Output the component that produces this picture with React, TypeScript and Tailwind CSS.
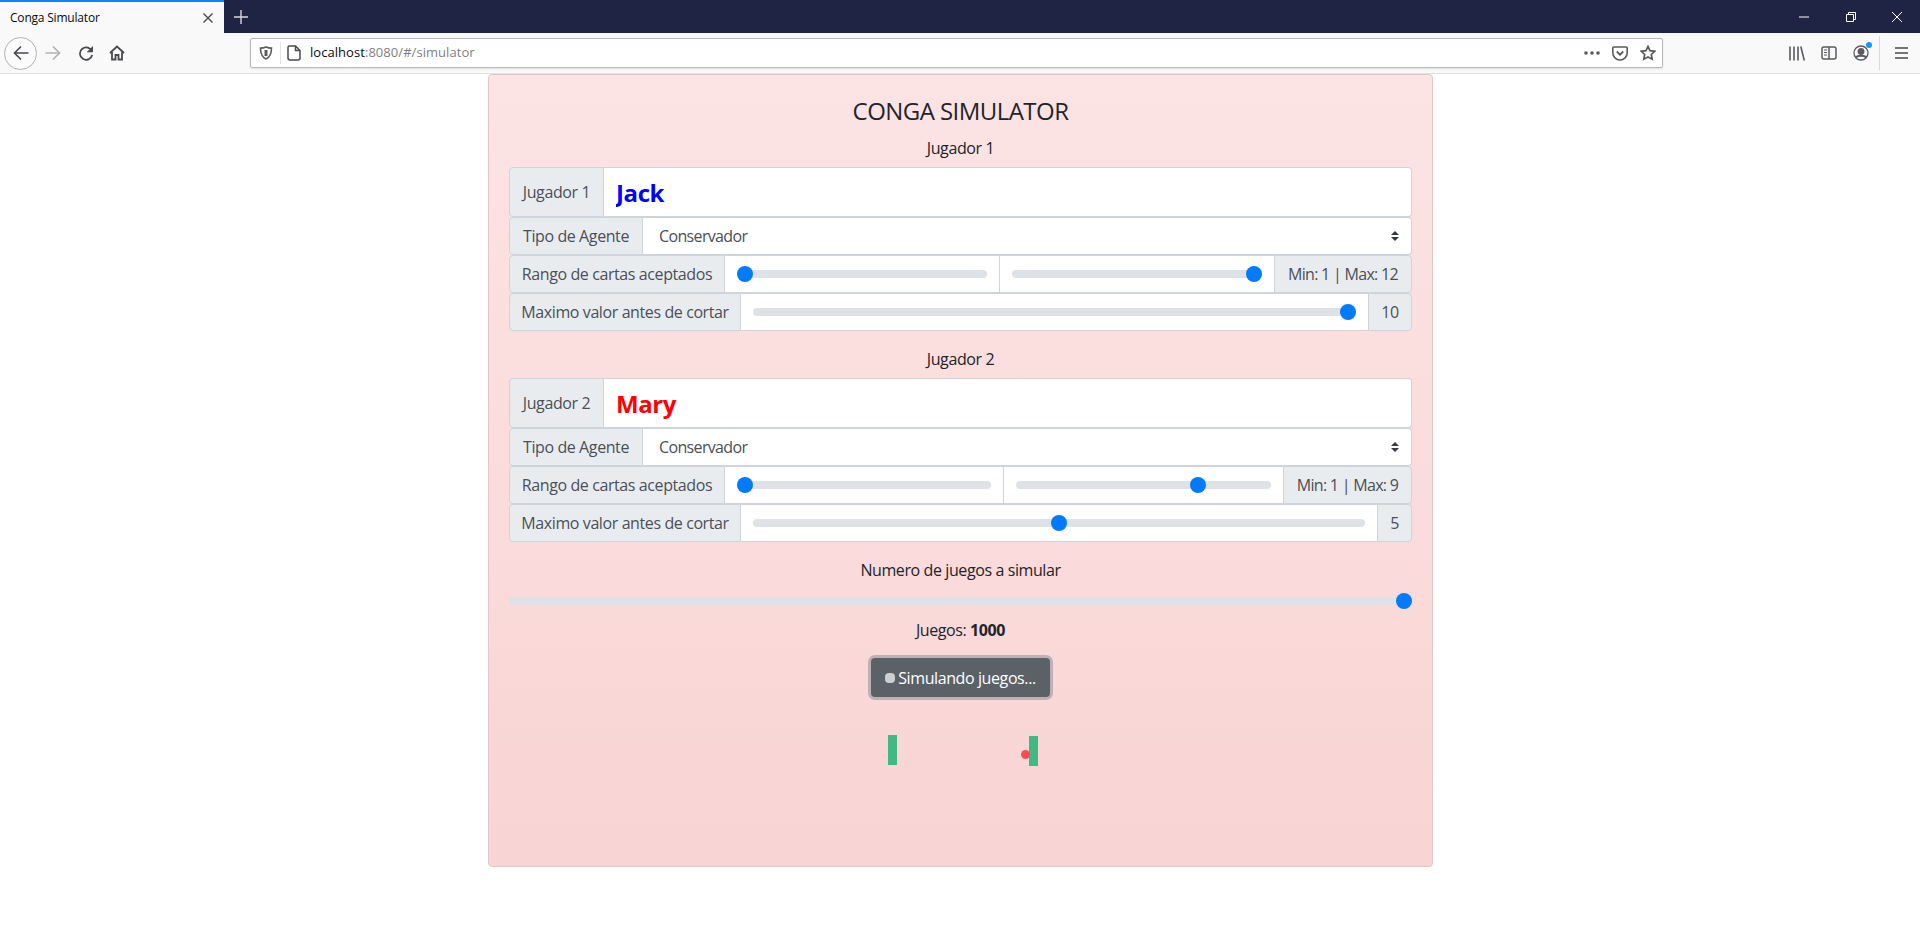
import React from 'react';

const font = "font-['Open_Sans',sans-serif]";

function Addon({ className = '', children }: { className?: string; children: React.ReactNode }) {
  return (
    <div className={`flex items-center justify-center shrink-0 bg-[#e9ecef] border border-[#ced4da] text-[#495057] whitespace-nowrap ${className}`}>
      {children}
    </div>
  );
}

function RangeCell({ value, min, max, className = '' }: { value: number; min: number; max: number; className?: string }) {
  return (
    <div className={`flex items-center bg-white border-y border-[#ced4da] px-3 ${className}`}>
      <input
        type="range"
        min={min}
        max={max}
        defaultValue={value}
        className="block w-full h-2 rounded-full bg-[#dee2e6] appearance-none [&::-webkit-slider-thumb]:appearance-none [&::-webkit-slider-thumb]:w-4 [&::-webkit-slider-thumb]:h-4 [&::-webkit-slider-thumb]:rounded-full [&::-webkit-slider-thumb]:bg-[#007bff]"
      />
    </div>
  );
}

function Player(props: {
  title: string;
  name: string;
  nameClass: string;
  w1: string;
  w2: string;
  minMax: string;
  maxRange: number;
  cutValue: number;
  cutText: string;
  cutW: string;
}) {
  return (
    <div>
      <p className="text-center text-[#212529] h-6 leading-6 mb-[7px]">{props.title}</p>
      <div className="flex h-[50px]">
        <Addon className="w-[95px] rounded-l">{props.title}</Addon>
        <input
          readOnly
          value={props.name}
          className={`flex-1 min-w-0 bg-white border border-l-0 border-[#ced4da] rounded-r pl-3 pr-3 pt-px text-2xl font-bold outline-none ${props.nameClass}`}
        />
      </div>
      <div className="flex h-[38px]">
        <Addon className="w-[134px] rounded-l">Tipo de Agente</Addon>
        <div className="flex-1 flex items-center justify-between bg-white border border-l-0 border-[#ced4da] rounded-r pl-4 pr-3 text-[#495057]">
          <span className="tracking-[-0.65px]">Conservador</span>
          <svg width="8" height="10" viewBox="0 0 8 10" fill="#343a40">
            <path d="M4 0 8 4H0zM4 10 0 6h8z" />
          </svg>
        </div>
      </div>
      <div className="flex h-[38px]">
        <Addon className="w-[216px] rounded-l">Rango de cartas aceptados</Addon>
        <RangeCell value={1} min={1} max={12} className={`border-r ${props.w1}`} />
        <RangeCell value={props.maxRange} min={1} max={12} className={props.w2} />
        <Addon className="flex-1 rounded-r tracking-[-0.7px]">{props.minMax}</Addon>
      </div>
      <div className="flex h-[38px]">
        <Addon className="w-[232px] rounded-l">Maximo valor antes de cortar</Addon>
        <RangeCell value={props.cutValue} min={0} max={10} className="flex-1" />
        <Addon className={`rounded-r ${props.cutW}`}>{props.cutText}</Addon>
      </div>
    </div>
  );
}

function BrowserChrome() {
  return (
    <div>
      <div className="flex h-[33px] bg-[#1f2445]">
        <div className="flex items-center justify-between w-[224px] bg-[#f9f9fa] border-t-2 border-[#0a84ff] pl-[10px] pr-[11px] text-xs text-[#0c0c0d]">
          <span className="tracking-[-0.2px]">Conga Simulator</span>
          <svg width="10" height="10" viewBox="0 0 10 10" stroke="#4a4a4f" strokeWidth="1.4">
            <path d="M.5.5l9 9M9.5.5l-9 9" />
          </svg>
        </div>
        <div className="flex items-center justify-center w-[34px]">
          <svg width="14" height="14" viewBox="0 0 14 14" stroke="#d7d7db" strokeWidth="1.4">
            <path d="M7 0v14M0 7h14" />
          </svg>
        </div>
        <div className="flex-1" />
        <div className="flex items-center pt-[1px]">
          <svg className="mr-[37px]" width="10" height="2" viewBox="0 0 10 2" stroke="#fff">
            <path d="M0 1h10" />
          </svg>
          <svg className="mr-[36px]" width="10" height="10" viewBox="0 0 10 10" fill="none" stroke="#fff">
            <path d="M.5 2.5h7v7h-7zM2.5 2.5v-2h7v7h-2" />
          </svg>
          <svg className="mr-[18px]" width="10" height="10" viewBox="0 0 10 10" stroke="#fff">
            <path d="M0 0l10 10M10 0 0 10" />
          </svg>
        </div>
      </div>
      <div className="flex items-center h-[41px] bg-[#f9f9fa] border-b border-[#e1e1e2]">
        <div className="flex items-center justify-center w-[33px] h-[33px] ml-[4px] rounded-full border border-[#b1b1b3] bg-[#fbfbfb]">
          <svg width="16" height="16" viewBox="0 0 16 16" fill="none" stroke="#4a4a4f" strokeWidth="1.7">
            <path d="M15.500 8H1.500M8 1.500 1.500 8 8 14.500" />
          </svg>
        </div>
        <svg className="ml-[8px]" width="16" height="16" viewBox="0 0 16 16" fill="none" stroke="#b1b1b3" strokeWidth="1.7">
          <path d="M.5 8h14M8 1.500 14.500 8 8 14.500" />
        </svg>
        <svg className="ml-[17px]" width="16" height="16" viewBox="0 0 16 16" fill="none" stroke="#4a4a4f" strokeWidth="1.8">
          <path d="M14 6.500A6.200 6.200 0 1 0 14.200 10" />
          <path d="M14.500 1.500v5.300H9.200" fill="#4a4a4f" strokeWidth="1" />
        </svg>
        <svg className="ml-[15px]" width="16" height="16" viewBox="0 0 16 16" fill="none" stroke="#4a4a4f" strokeWidth="1.8">
          <path d="M1 8 8 1.500 15 8M3 7v7.500h3.500V10h3v4.500H13V7" />
        </svg>
        <div className="flex items-center w-[1413px] h-[30px] ml-[125px] bg-white border border-[#b9b9bb] rounded-[2px] shadow-[0_1px_2px_rgba(0,0,0,0.1)]">
          <svg className="ml-[8px]" width="14" height="14" viewBox="0 0 14 14" fill="none" stroke="#5b5b5f" strokeWidth="1.6">
            <path d="M7 1c2 .9 3.800 1.100 5.500 1.100 0 5.500-1.600 9.200-5.500 10.900C3.100 11.300 1.500 7.600 1.500 2.100 3.200 2.100 5 1.900 7 1z" />
            <path d="M7 4v6" strokeWidth="3" />
          </svg>
          <div className="w-px h-[22px] ml-[7px] bg-[#e4e4e5]" />
          <svg className="ml-[6px]" width="14" height="16" viewBox="0 0 14 16" fill="none" stroke="#4a4a4f" strokeWidth="1.5">
            <path d="M2.500 1H8.500L13 5.500V13a2 2 0 0 1-2 2H3a2 2 0 0 1-2-2V2.500A1.500 1.500 0 0 1 2.500 1zM8.500 1v4.500H13" />
          </svg>
          <span className="ml-[9px] text-[13px] tracking-[0.05px] text-[#0c0c0d]">
            localhost<span className="text-[#7f7f83]">:8080/#/simulator</span>
          </span>
          <div className="flex-1" />
          <svg width="16" height="4" viewBox="0 0 16 4" fill="#5b5b5f">
            <circle cx="2" cy="2" r="1.800" />
            <circle cx="8" cy="2" r="1.800" />
            <circle cx="14" cy="2" r="1.800" />
          </svg>
          <svg className="ml-[12px]" width="16" height="15" viewBox="0 0 16 15" fill="none" stroke="#5b5b5f" strokeWidth="1.600">
            <path d="M1.800 1h12.400a1 1 0 0 1 1 1v4.800a7.200 7.200 0 0 1-14.400 0V2a1 1 0 0 1 1-1z" />
            <path d="M4.800 5.500 8 8.700l3.200-3.200" strokeWidth="1.800" />
          </svg>
          <svg className="ml-[12px] mr-[6px]" width="16" height="16" viewBox="0 0 16 16" fill="none" stroke="#5b5b5f" strokeWidth="1.700">
            <path d="M8 1.400l2 4.300 4.700.6-3.400 3.200.9 4.700L8 11.900l-4.200 2.300.9-4.700L1.300 6.300 6 5.700z" />
          </svg>
        </div>
        <svg className="ml-[126px]" width="16" height="15" viewBox="0 0 16 15" stroke="#5b5b5f" strokeWidth="1.600">
          <path d="M1 .5v14M5 .5v14M9 .5v14M11.800.5l3.500 14" />
        </svg>
        <svg className="ml-[16px]" width="16" height="14" viewBox="0 0 16 14" fill="none" stroke="#5b5b5f" strokeWidth="1.500">
          <rect x="1" y="1" width="14" height="12" rx="2" />
          <path d="M8 1v12" />
          <path d="M3 4h3M3 6.500h3M3 9h3" strokeWidth="1" />
        </svg>
        <div className="relative ml-[16px] w-4 h-4">
          <svg width="16" height="16" viewBox="0 0 16 16" fill="none" stroke="#5b5b5f" strokeWidth="1.300">
            <circle cx="8" cy="8" r="7" />
            <circle cx="8" cy="6.500" r="2.800" fill="#5b5b5f" />
            <path d="M3 12.500c1.500-2.500 8.500-2.500 10 0" strokeWidth="2" />
          </svg>
          <div className="absolute -top-[3px] -right-[3px] w-[6px] h-[6px] rounded-full bg-[#0a9dff]" />
        </div>
        <div className="w-px h-[34px] ml-[10px] bg-[#d9d9da]" />
        <svg className="ml-[15px]" width="13" height="12" viewBox="0 0 13 12" stroke="#4a4a4f" strokeWidth="1.700">
          <path d="M0 1h13M0 6h13M0 11h13" />
        </svg>
      </div>
    </div>
  );
}

export default function App() {
  return (
    <div className={`min-h-[925px] bg-white ${font}`}>
      <BrowserChrome />
      <div className="relative ml-[488px] w-[945px] h-[793px] rounded border border-[#e3c6c8] bg-gradient-to-b from-[#fce4e4] to-[#f9d4d4] px-5 pt-[21px] text-base leading-6 tracking-[-0.4px]">
        <h4 className="text-center text-2xl leading-[29px] tracking-[-0.55px] text-[#212529] mb-[11px]">CONGA SIMULATOR</h4>
        <Player
          title="Jugador 1"
          name="Jack"
          nameClass="text-[#0000ff]"
          w1="w-[275px]"
          w2="w-[274px]"
          minMax="Min: 1 | Max: 12"
          maxRange={12}
          cutValue={10}
          cutText="10"
          cutW="w-[44px]"
        />
        <div className="h-4" />
        <Player
          title="Jugador 2"
          name="Mary"
          nameClass="text-[#ff0000]"
          w1="w-[279px]"
          w2="w-[279px]"
          minMax="Min: 1 | Max: 9"
          maxRange={9}
          cutValue={5}
          cutText="5"
          cutW="w-[35px]"
        />
        <p className="mt-4 text-center text-[#212529]">Numero de juegos a simular</p>
        <input
          type="range"
          min={0}
          max={1000}
          defaultValue={1000}
          className="block w-full h-2 mt-[15px] rounded-full bg-[#dee2e6] appearance-none [&::-webkit-slider-thumb]:appearance-none [&::-webkit-slider-thumb]:w-4 [&::-webkit-slider-thumb]:h-4 [&::-webkit-slider-thumb]:rounded-full [&::-webkit-slider-thumb]:bg-[#007bff]"
        />
        <p className="mt-[13px] text-center text-[#212529]">
          Juegos: <b>1000</b>
        </p>
        <div className="flex justify-center mt-4">
          <button className="flex items-center justify-center w-[179px] h-[39px] rounded bg-[#5a6268] text-white shadow-[0_0_0_3px_rgba(130,138,145,0.5)]">
            <span className="w-[10px] h-[10px] mr-[3px] mt-px rounded-[4px] bg-[#cdd0d3]" />
            Simulando juegos...
          </button>
        </div>
        {/* paddles and ball of the little game under the button */}
        <div className="absolute left-[399px] top-[660px] w-[9px] h-[30px] bg-[#42b883]" />
        <div className="absolute left-[540px] top-[661px] w-[9px] h-[30px] bg-[#42b883]" />
        <div className="absolute left-[532px] top-[675px] w-[9px] h-[9px] rounded-full bg-[#ff4a55]" />
      </div>
    </div>
  );
}
